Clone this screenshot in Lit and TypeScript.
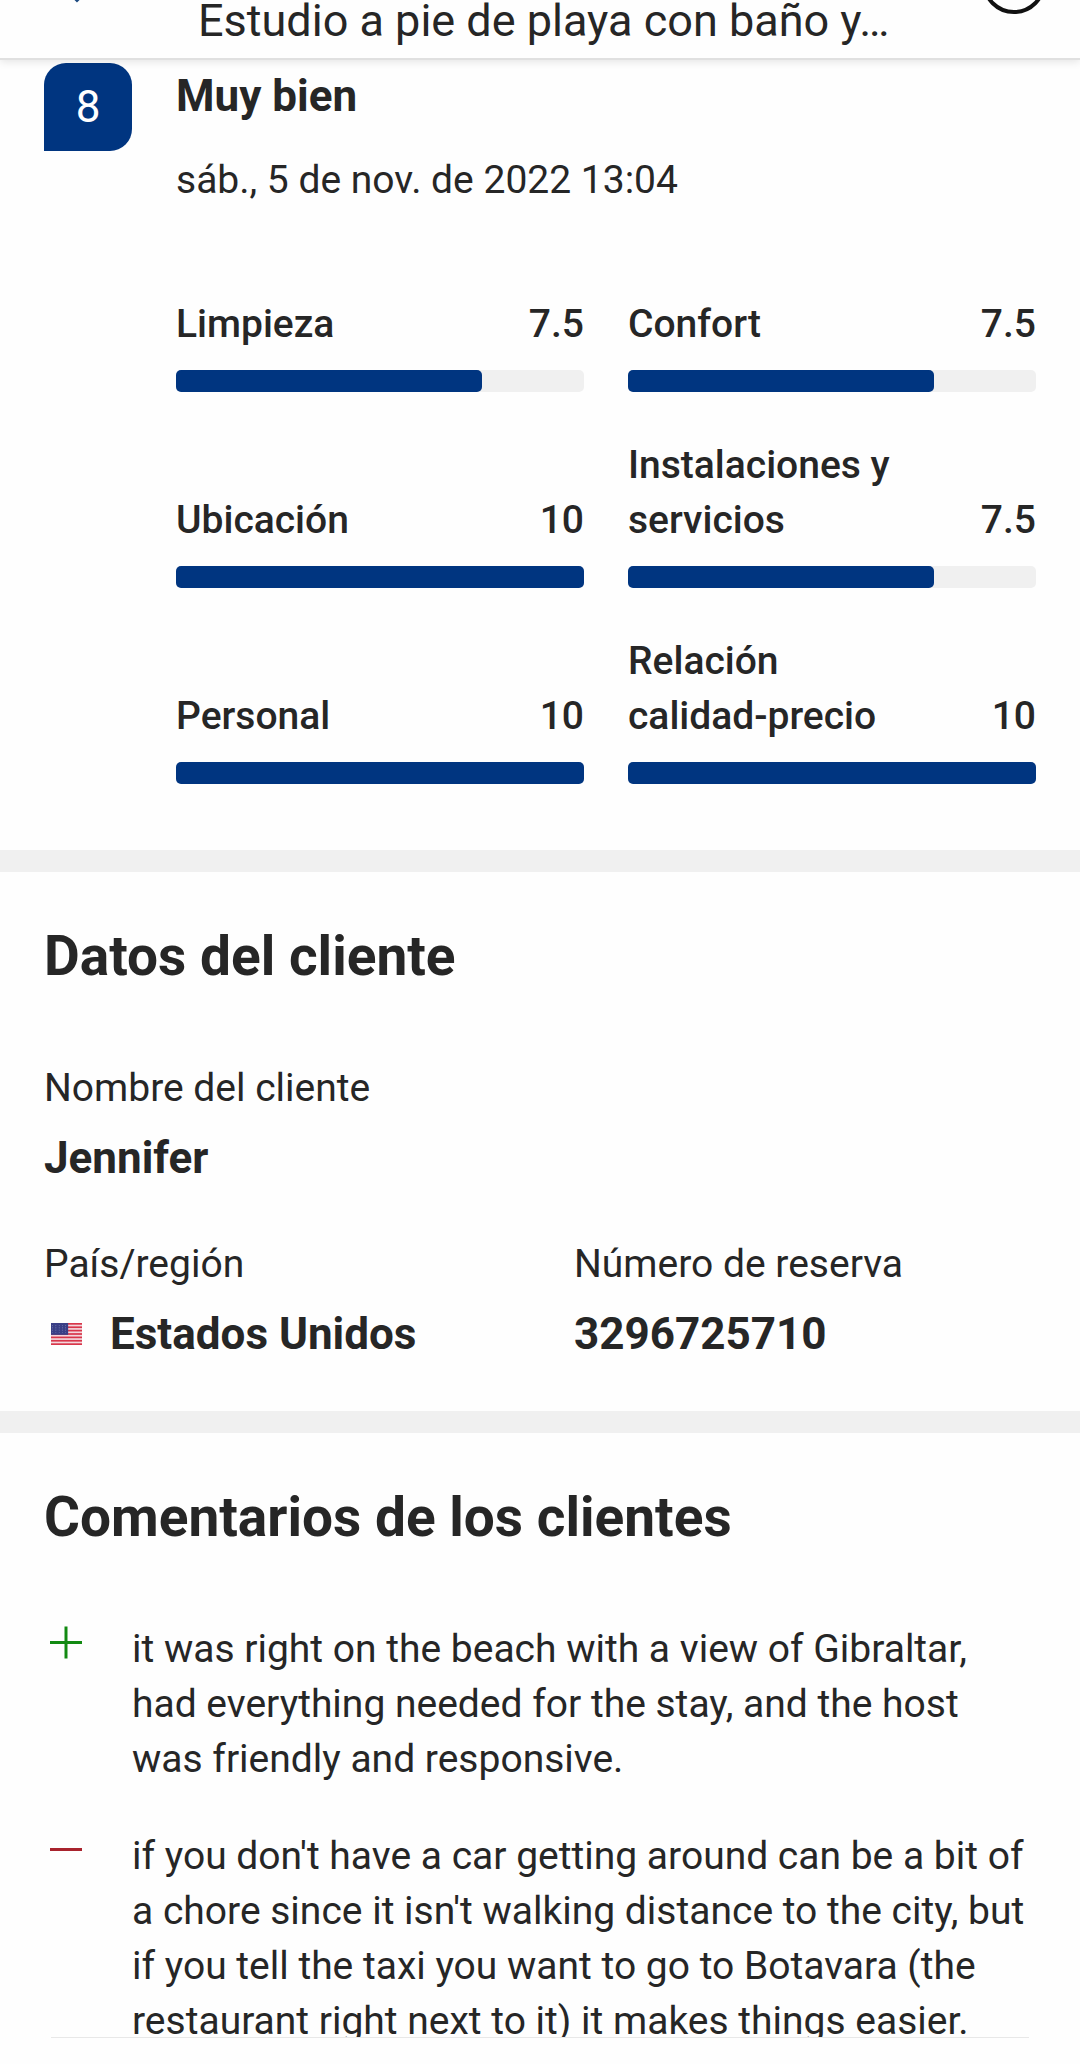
import { LitElement, html, css, svg } from "lit";
import { customElement, property } from "lit/decorators.js";

interface Score {
  label: string;
  value: number;
  text: string;
}

const SCORES: Score[] = [
  { label: "Limpieza", value: 7.5, text: "7.5" },
  { label: "Confort", value: 7.5, text: "7.5" },
  { label: "Ubicación", value: 10, text: "10" },
  { label: "Instalaciones y servicios", value: 7.5, text: "7.5" },
  { label: "Personal", value: 10, text: "10" },
  { label: "Relación calidad-precio", value: 10, text: "10" },
];

@customElement("score-bar")
export class ScoreBar extends LitElement {
  @property() label = "";
  @property() text = "";
  @property({ type: Number }) value = 0;

  static styles = css`
    :host {
      display: flex;
      flex-direction: column;
      justify-content: flex-end;
      gap: 18px;
      color: #262626;
      font-size: 39px;
      line-height: 55px;
      font-weight: 500;
    }
    .head {
      display: flex;
      align-items: flex-end;
      justify-content: space-between;
    }
    .label {
      max-width: 70%;
    }
    .track {
      height: 22px;
      background: #f0f0f0;
      border-radius: 5px;
    }
    .fill {
      height: 100%;
      background: #003580;
      border-radius: 5px;
    }
  `;

  render() {
    return html`
      <div class="head">
        <span class="label">${this.label}</span>
        <span>${this.text}</span>
      </div>
      <div class="track">
        <div class="fill" style="width: ${this.value * 10}%"></div>
      </div>
    `;
  }
}

@customElement("app-root")
export class AppRoot extends LitElement {
  static styles = css`
    :host {
      display: flex;
      flex-direction: column;
      height: 100vh;
      overflow: hidden;
      background: #fefefe;
      color: #262626;
      font-family: Roboto, "Liberation Sans", sans-serif;
      font-size: 39px;
      line-height: 55px;
    }
    h1,
    h2,
    p,
    dl,
    dd,
    ul {
      margin: 0;
      padding: 0;
    }
    .bar {
      display: flex;
      align-items: flex-end;
      flex: none;
      height: 58px;
      padding: 0 33px;
      background: #fefefe;
      border-bottom: 2px solid #e0e0e0;
      box-shadow: 0 2px 8px rgba(0, 0, 0, 0.1);
      overflow: hidden;
      z-index: 1;
    }
    .icon-button {
      flex: none;
      display: block;
      padding: 0;
      border: 0;
      background: none;
    }
    .icon-button svg {
      display: block;
    }
    .title {
      flex: 1;
      min-width: 0;
      padding: 0 44px 16px 108px;
      font-size: 45px;
      line-height: 42px;
      font-weight: 400;
      white-space: nowrap;
    }
    .content {
      display: flex;
      flex-direction: column;
      flex: 1;
      min-height: 0;
      overflow: hidden;
    }
    .review {
      display: grid;
      grid-template-columns: 88px 1fr;
      column-gap: 44px;
      padding: 3px 44px 66px;
    }
    .badge {
      display: flex;
      align-items: center;
      justify-content: center;
      height: 88px;
      border-radius: 22px 22px 22px 0;
      background: #003580;
      color: #fff;
      font-size: 44px;
    }
    .verdict {
      font-size: 44px;
      line-height: 66px;
      font-weight: 700;
    }
    .date {
      padding-top: 24px;
    }
    .scores {
      display: grid;
      grid-template-columns: 1fr 1fr;
      gap: 46px 44px;
      padding-top: 89px;
    }
    .divider {
      flex: none;
      height: 22px;
      background: #f0f0f0;
    }
    .section {
      display: flex;
      flex-direction: column;
      padding: 44px 44px 49px;
    }
    .heading {
      font-size: 55px;
      line-height: 80px;
      font-weight: 700;
    }
    .facts {
      display: grid;
      grid-template-columns: 1fr 1fr;
      gap: 51px 68px;
      padding-top: 65px;
    }
    .wide {
      grid-column: 1 / -1;
    }
    .fact-value {
      display: flex;
      align-items: center;
      padding-top: 14px;
      font-size: 44px;
      line-height: 56px;
      font-weight: 700;
    }
    .flag {
      flex: none;
      margin: 0 28px 0 7px;
    }
    .comments {
      display: flex;
      flex-direction: column;
      gap: 42px;
      padding-top: 65px;
      list-style: none;
    }
    .comment {
      display: flex;
      gap: 44px;
    }
    .comment svg {
      flex: none;
    }
    .clip {
      min-height: 0;
      overflow: hidden;
      padding-bottom: 0;
    }
    .rule {
      flex: none;
      height: 1px;
      margin: 0 51px 26px;
      background: #e8e8e8;
    }
  `;

  private flag() {
    const stripes = [0, 2, 4, 6, 8, 10, 12].map(
      (i) => svg`<rect y=${i} width="19" height="1" fill="#d8364a"></rect>`
    );
    const stars = [1, 2, 3, 4, 5].flatMap((y) =>
      [1, 3, 5, 7, 9].map(
        (x) => svg`<circle cx=${x} cy=${y + 0.5} r="0.25" fill="#8f97c8"></circle>`
      )
    );
    return html`<svg
      class="flag"
      width="31"
      height="22"
      viewBox="0 0 19 13"
      preserveAspectRatio="none"
      role="img"
      aria-label="Estados Unidos"
    >
      <rect width="19" height="13" fill="#f3d6dc"></rect>
      ${stripes}
      <rect width="10.5" height="7" fill="#3a3f86"></rect>
      ${stars}
    </svg>`;
  }

  render() {
    return html`
      <header class="bar">
        <button class="icon-button" aria-label="Volver">
          <svg width="57" height="122" viewBox="0 0 57 122" fill="none" stroke="#1c4a80" stroke-width="5">
            <path d="M21 40 L44 63 L50 57"></path>
          </svg>
        </button>
        <h1 class="title">Estudio a pie de playa con baño y…</h1>
        <button class="icon-button" aria-label="Ayuda">
          <svg width="66" height="110" viewBox="0 0 66 110" fill="none" stroke="#111" stroke-width="4">
            <circle cx="33" cy="34" r="30"></circle>
          </svg>
        </button>
      </header>

      <main class="content">
        <section class="review">
          <div class="badge">8</div>
          <div>
            <h2 class="verdict">Muy bien</h2>
            <p class="date">sáb., 5 de nov. de 2022 13:04</p>
            <div class="scores">
              ${SCORES.map(
                (s) => html`<score-bar .label=${s.label} .text=${s.text} .value=${s.value}></score-bar>`
              )}
            </div>
          </div>
        </section>

        <div class="divider"></div>

        <section class="section">
          <h2 class="heading">Datos del cliente</h2>
          <dl class="facts">
            <div class="wide">
              <dt>Nombre del cliente</dt>
              <dd class="fact-value">Jennifer</dd>
            </div>
            <div>
              <dt>País/región</dt>
              <dd class="fact-value">${this.flag()}Estados Unidos</dd>
            </div>
            <div>
              <dt>Número de reserva</dt>
              <dd class="fact-value">3296725710</dd>
            </div>
          </dl>
        </section>

        <div class="divider"></div>

        <section class="section clip">
          <h2 class="heading">Comentarios de los clientes</h2>
          <ul class="comments">
            <li class="comment">
              <svg width="44" height="44" viewBox="0 0 44 44" stroke="#128a12" stroke-width="3" aria-hidden="true">
                <path d="M6 20.5 H38 M22 4.5 V36.5"></path>
              </svg>
              <p>
                it was right on the beach with a view of Gibraltar, had everything needed for the
                stay, and the host was friendly and responsive.
              </p>
            </li>
            <li class="comment">
              <svg width="44" height="44" viewBox="0 0 44 44" stroke="#a8232d" stroke-width="3" aria-hidden="true">
                <path d="M6 20.5 H38"></path>
              </svg>
              <p>
                if you don't have a car getting around can be a bit of a chore since it isn't
                walking distance to the city, but if you tell the taxi you want to go to Botavara
                (the restaurant right next to it) it makes things easier.
              </p>
            </li>
          </ul>
        </section>
      </main>
      <div class="rule"></div>
    `;
  }
}
